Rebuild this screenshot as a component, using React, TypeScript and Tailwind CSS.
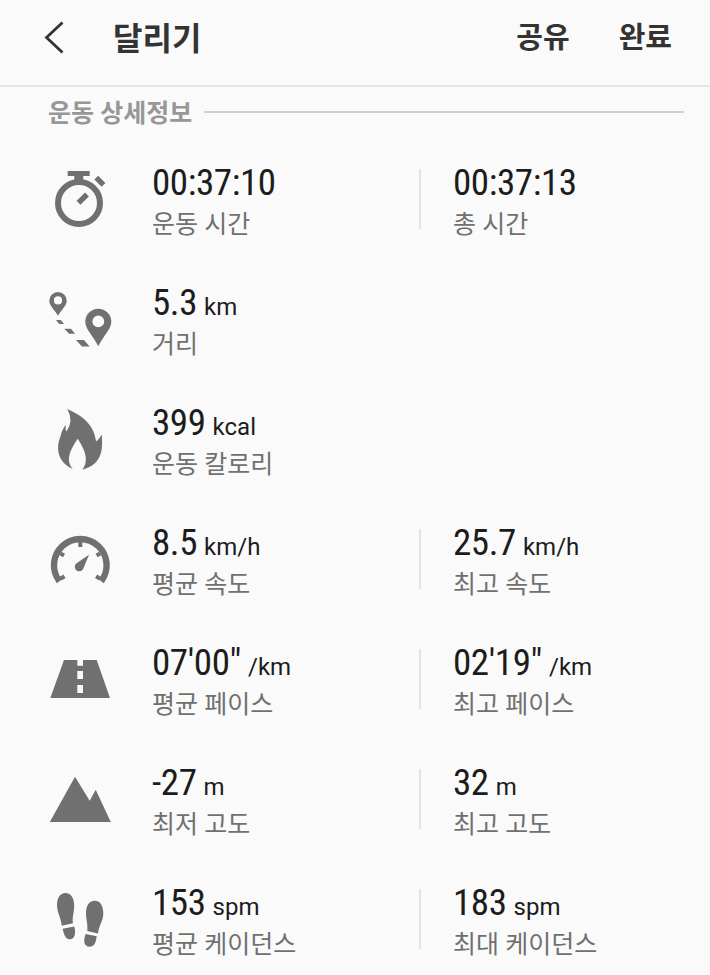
import type { ReactNode } from "react";

interface Metric {
  value: string;
  unit?: string;
  label: string;
}

interface Row {
  icon: ReactNode;
  metrics: Metric[];
}

const StopwatchIcon = () => (
  <>
    <circle cx="31" cy="36" r="21" fill="none" stroke="currentColor" strokeWidth="6" />
    <path d="M19.7 4H41.7V9H35.3V14H26.3V9H19.7Z" />
    <path d="M48.3 10.6L55.5 17.8M30.5 35.8L39 27.5" stroke="currentColor" strokeWidth="5.4" />
  </>
);

const RouteIcon = () => (
  <>
    <path
      fillRule="evenodd"
      d="M10 5A8.7 8.7 0 0 0 1.3 13.7C1.3 19 7 23 10 28.7C13 23 18.7 19 18.7 13.7A8.7 8.7 0 0 0 10 5ZM10 9.3A4.1 4.1 0 1 1 10 17.5A4.1 4.1 0 1 1 10 9.3Z"
    />
    <path
      fillRule="evenodd"
      d="M50.3 21.8A13 13 0 0 0 37.3 34.8C37.3 42 45 49 50.3 59.3C55.5 49 63.3 42 63.3 34.8A13 13 0 0 0 50.3 21.8ZM50.3 28.5A5.9 5.9 0 1 1 50.3 40.3A5.9 5.9 0 1 1 50.3 28.5Z"
    />
    <path d="M8 33H12.7L16 37H11.3ZM16.4 41.7H23L27 46.7H21ZM28 53H36L41.6 59.5H34Z" />
  </>
);

const FlameIcon = () => (
  <path d="M19.3 2C30 7 46 15 48 34.5Q51.5 32 53.7 27.5C55 42 54.5 57.5 34.3 62.7C40.5 55 38.5 45 29.7 31.7C20.5 45 18 54 24.7 62C9 55 8 40 12.3 30Q14 22 17.8 18Q17 22 18.5 24.5Q26 14 19.3 2Z" />
);

const GaugeIcon = () => (
  <>
    <path
      d="M11.4 54.2A26.3 26.3 0 1 1 53.2 54.2"
      fill="none"
      stroke="currentColor"
      strokeWidth="6.4"
    />
    <path
      d="M32.3 14V20M12.5 26.5L16 28.5M52.1 26.5L48.6 28.5M12.5 51.8L16.5 49.3M52.1 51.8L48.1 49.3"
      stroke="currentColor"
      strokeWidth="4"
    />
    <path d="M41 27.7L35.6 41A4.5 4.5 0 1 1 28.2 36.5Z" />
  </>
);

const RoadIcon = () => (
  <path
    fillRule="evenodd"
    d="M16 13H29.3V18.7H35V13H48.7L62 51H2.3ZM29.3 24V32H35V24ZM29.3 38V46H35V38Z"
  />
);

const MountainIcon = () => <path d="M1.8 55L27 9.7L41.7 33.7L47.7 22.7L62.8 55Z" />;

const FootstepsIcon = () => (
  <>
    <path d="M17.5 6C12 6 9 11 9 18C9 26 13 30 13.7 38.7L25 36.3C24 30 26.2 26 26.2 18C26 11 23 6 17.5 6Z" />
    <path d="M14.7 41.7L26.3 39.5C28 46 27 51.5 22.5 52.3C17.5 52.5 16 48 14.7 41.7Z" />
    <path d="M46.7 13.7C41 13.7 38 19 38 26C38 33 40 37 39.3 44L50 46.5C51 38 55.3 34 55.3 26C55 18 52 13.7 46.7 13.7Z" />
    <path d="M37.7 47L48.7 49.3C48 56 46 59.7 41.5 59.7C36 59.5 35 54 37.7 47Z" />
  </>
);

const rows: Row[] = [
  {
    icon: <StopwatchIcon />,
    metrics: [
      { value: "00:37:10", label: "운동 시간" },
      { value: "00:37:13", label: "총 시간" },
    ],
  },
  { icon: <RouteIcon />, metrics: [{ value: "5.3", unit: "km", label: "거리" }] },
  { icon: <FlameIcon />, metrics: [{ value: "399", unit: "kcal", label: "운동 칼로리" }] },
  {
    icon: <GaugeIcon />,
    metrics: [
      { value: "8.5", unit: "km/h", label: "평균 속도" },
      { value: "25.7", unit: "km/h", label: "최고 속도" },
    ],
  },
  {
    icon: <RoadIcon />,
    metrics: [
      { value: "07'00\"", unit: "/km", label: "평균 페이스" },
      { value: "02'19\"", unit: "/km", label: "최고 페이스" },
    ],
  },
  {
    icon: <MountainIcon />,
    metrics: [
      { value: "-27", unit: "m", label: "최저 고도" },
      { value: "32", unit: "m", label: "최고 고도" },
    ],
  },
  {
    icon: <FootstepsIcon />,
    metrics: [
      { value: "153", unit: "spm", label: "평균 케이던스" },
      { value: "183", unit: "spm", label: "최대 케이던스" },
    ],
  },
];

const MetricCell = ({ value, unit, label }: Metric) => (
  <div className="flex flex-col whitespace-nowrap pt-[9px]">
    <div className="flex h-[41px] items-baseline font-['Roboto_Condensed',Roboto,sans-serif] leading-[41px] text-[#1c1c1c]">
      <span className="text-[37px] tracking-[-0.4px] [font-stretch:75%]">{value}</span>
      {unit && <span className="ml-[7px] font-[Roboto,sans-serif] text-[24px]">{unit}</span>}
    </div>
    <div className="mt-[2px] h-[40px] text-[25px] leading-[40px] text-[#707070]">{label}</div>
  </div>
);

const App = () => {
  return (
    <div className="flex h-[975px] w-[710px] flex-col overflow-hidden bg-[#fafafa] font-[Roboto,'Noto_Sans_CJK_KR',sans-serif]">
      <header className="flex h-[87px] shrink-0 items-center border-b-2 border-[#e7e7e7] pb-[10px] pl-[44px] pr-[38px] text-[#333]">
        <svg width="20" height="34" viewBox="0 0 20 34" fill="none" stroke="currentColor" strokeWidth="2.8">
          <path d="M18.5 1.5L2.5 16.5L18.5 31.5" />
        </svg>
        <h1 className="ml-[49px] pt-[3px] text-[32px] font-bold">달리기</h1>
        <button className="ml-auto pt-[3px] text-[29px] font-bold">공유</button>
        <button className="ml-[49px] pt-[3px] text-[29px] font-bold">완료</button>
      </header>
      <div className="flex h-[52px] shrink-0 items-center pb-[2px] pl-[48px] pr-[26px]">
        <h2 className="pt-[3px] text-[25px] font-bold text-[#979797]">운동 상세정보</h2>
        <div className="ml-[12px] h-[2px] flex-1 bg-[#d0d0d0]" />
      </div>
      <main>
        {rows.map((row, i) => (
          <section key={i} className="flex h-[120px] items-center pl-[48px]">
            <svg width="64" height="64" viewBox="0 0 64 64" fill="currentColor" className="text-[#707070]">
              {row.icon}
            </svg>
            <div className="ml-[40px] w-[267px]">
              <MetricCell {...row.metrics[0]} />
            </div>
            {row.metrics[1] && (
              <>
                <div className="mr-[32px] h-[60px] w-[2px] bg-[#e3e3e3]" />
                <MetricCell {...row.metrics[1]} />
              </>
            )}
          </section>
        ))}
      </main>
    </div>
  );
};

export default App;
